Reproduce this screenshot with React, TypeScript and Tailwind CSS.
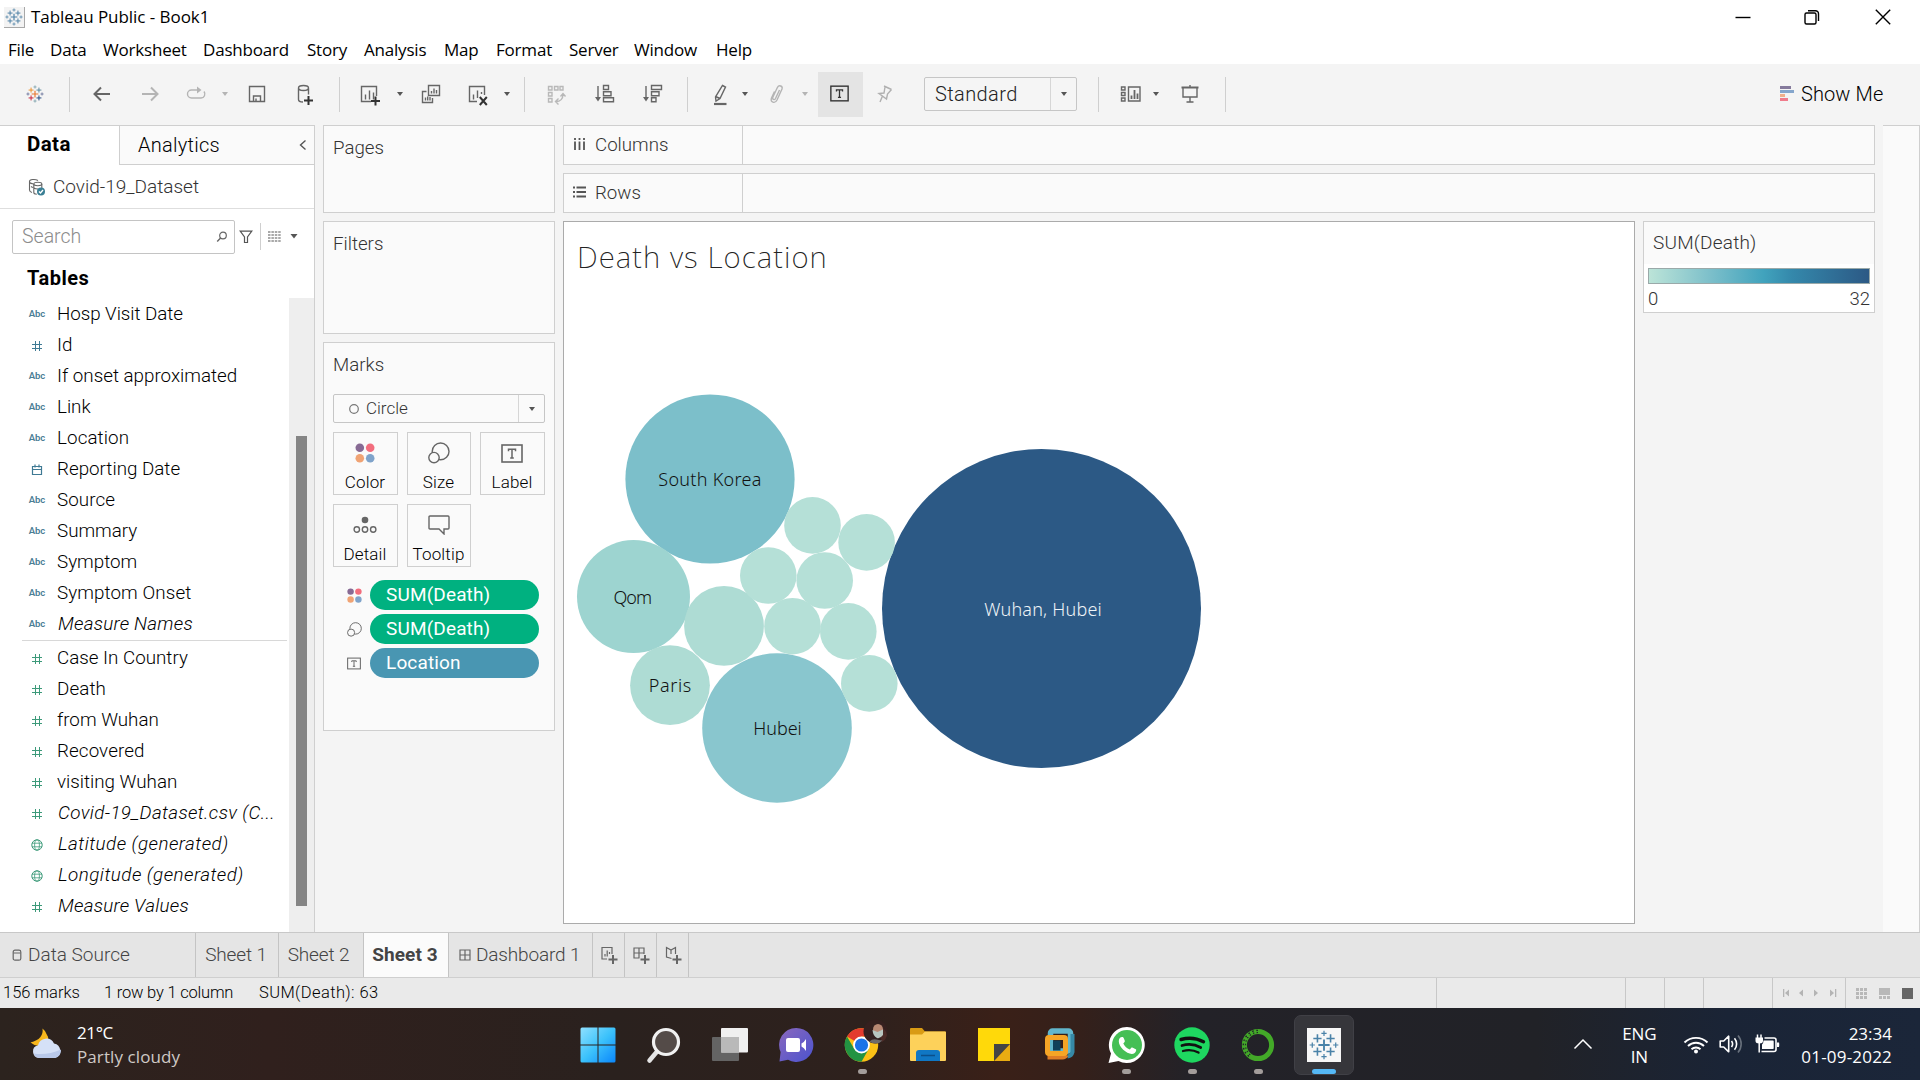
import type { ReactNode } from "react";

type SvgProps = { children: ReactNode; w?: number; h?: number; className?: string };

function Svg({ children, w = 24, h = 24, className = "" }: SvgProps) {
  return (
    <svg
      width={w}
      height={h}
      viewBox={`0 0 ${w} ${h}`}
      fill="none"
      stroke="currentColor"
      strokeWidth="1.4"
      className={`shrink-0 ${className}`}
    >
      {children}
    </svg>
  );
}

/* ---------- shared drawings ---------- */

const LOGO_MARKS: [number, number, number, number, string][] = [
  [16, 16, 6, 2, "#e8762c"],
  [9, 9, 4.4, 1.7, "#eb912c"],
  [23, 9, 4.4, 1.7, "#59879b"],
  [9, 23, 4.4, 1.7, "#c72035"],
  [23, 23, 4.4, 1.7, "#1f457e"],
  [16, 3.5, 2.8, 1.3, "#7099a6"],
  [16, 28.5, 2.8, 1.3, "#7099a6"],
  [3.5, 16, 2.8, 1.3, "#5b6591"],
  [28.5, 16, 2.8, 1.3, "#5b6591"],
];

function TableauMark({ size, mono }: { size: number; mono?: string }) {
  return (
    <svg width={size} height={size} viewBox="0 0 32 32" className="shrink-0">
      {LOGO_MARKS.map(([x, y, r, s, c], i) => (
        <path key={i} d={`M${x - r} ${y}H${x + r}M${x} ${y - r}V${y + r}`} stroke={mono ?? c} strokeWidth={s} />
      ))}
    </svg>
  );
}

function Caret({ className = "text-[#555]" }: { className?: string }) {
  return (
    <svg width="10" height="6" viewBox="0 0 10 6" className={`shrink-0 ${className}`}>
      <path d="M2 1h6L5 5z" fill="currentColor" />
    </svg>
  );
}

function Sep({ className = "" }: { className?: string }) {
  return <div className={`h-[35px] w-px shrink-0 bg-[#cfcfcf] ${className}`} />;
}

function ColorDots({ size }: { size: number }) {
  return (
    <svg width={size} height={size} viewBox="0 0 20 20">
      <circle cx="4.8" cy="4.8" r="4.3" fill="#876a94" />
      <circle cx="15.2" cy="4.8" r="4.3" fill="#f26d7d" />
      <circle cx="4.8" cy="15.2" r="4.3" fill="#f0a374" />
      <circle cx="15.2" cy="15.2" r="4.3" fill="#7fa3ca" />
    </svg>
  );
}

function SizeRings({ size }: { size: number }) {
  return (
    <svg width={size} height={size} viewBox="0 0 22 22" fill="none" stroke="#666" strokeWidth="1.4">
      <circle cx="12.6" cy="9.4" r="8.4" />
      <circle cx="6" cy="15.6" r="5.2" fill="#fafafa" />
    </svg>
  );
}

function TextBoxIcon({ w, h, className = "text-[#666]" }: { w: number; h: number; className?: string }) {
  return (
    <svg width={w} height={h} viewBox="0 0 22 19" fill="none" stroke="currentColor" className={className}>
      <rect x="1" y="1" width="20" height="17" strokeWidth="1.6" />
      <path d="M7.5 7.2V5.3h7v1.9M11 5.3v8.5M9.2 13.9h3.6" strokeWidth="1.5" />
    </svg>
  );
}

const BARS = "M7.5 17.5v-5M11.5 17.5V8.5M15.5 17.5v-7";

/* ---------- title + menu ---------- */

function TitleBar() {
  return (
    <div className="flex h-[35px] shrink-0 items-center bg-white pb-px pl-1">
      <div className="flex h-[21px] w-[21px] items-center justify-center border-r border-b border-[#a8a8a8] bg-[#f3f3f3]">
        <TableauMark size={18} mono="#4a7fa5" />
      </div>
      <span className="ml-1.5 text-[17px] tracking-[-0.05px] text-black">Tableau Public - Book1</span>
      <div className="ml-auto flex items-center pb-px text-black">
        <Svg w={18} h={18} className="mr-[51px]">
          <path d="M1.5 9.5h15" stroke="#000" />
        </Svg>
        <Svg w={18} h={18} className="mr-[53px]">
          <rect x="2" y="5" width="11" height="11" rx="1.5" />
          <path d="M5 2.7h7.5a3 3 0 0 1 3 3V13" />
        </Svg>
        <Svg w={18} h={18} className="mr-[28px]">
          <path d="M1.8 1.8l14.4 14.4M16.2 1.8L1.8 16.2" />
        </Svg>
      </div>
    </div>
  );
}

const MENU: [string, string][] = [
  ["File", "w-[42px]"],
  ["Data", "w-[53px]"],
  ["Worksheet", "w-[100px]"],
  ["Dashboard", "w-[104px]"],
  ["Story", "w-[57px]"],
  ["Analysis", "w-[80px]"],
  ["Map", "w-[52px]"],
  ["Format", "w-[73px]"],
  ["Server", "w-[65px]"],
  ["Window", "w-[82px]"],
  ["Help", "w-[50px]"],
];

function MenuBar() {
  return (
    <div className="flex h-[29px] shrink-0 items-center bg-white pl-2 text-[17px] tracking-[-0.2px] text-black">
      {MENU.map(([t, w]) => (
        <span key={t} className={`${w} shrink-0 pb-px leading-none`}>
          {t}
        </span>
      ))}
    </div>
  );
}

/* ---------- toolbar ---------- */

function Toolbar() {
  return (
    <div className="flex h-[61px] shrink-0 items-center bg-[#f4f4f4] pb-px text-[#666]">
      <div className="ml-[25px] flex w-5 shrink-0 justify-center">
        <TableauMark size={18} />
      </div>
      <Sep className="ml-6" />
      <Svg className="ml-5">
        <path d="M20 12H5M11 5.5L4.5 12l6.5 6.5" strokeWidth="2" />
      </Svg>
      <Svg className="ml-6 text-[#b4b4b4]">
        <path d="M4 12h15M13 5.5l6.5 6.5-6.5 6.5" strokeWidth="2" />
      </Svg>
      <Svg className="ml-[22px] text-[#b4b4b4]">
        <path d="M13 8H7.5a4 4 0 0 0 0 8h9.5a4 4 0 0 0 3-6.5" />
        <path d="M13 4.5L17.5 8 13 11.5z" fill="currentColor" stroke="none" />
      </Svg>
      <Caret className="ml-3 text-[#b4b4b4]" />
      <Svg className="ml-[15px]">
        <path d="M4.500 4.500h15v15h-15zM8.500 19.500v-5.500h7v5.500M11 19.500v-3" />
      </Svg>
      <Svg className="ml-[23px]">
        <path d="M6.500 6.500v11c0 1.500 2 2.500 4.500 2.500M16.500 6.500v6" />
        <ellipse cx="11.500" cy="6" rx="5" ry="2.500" />
        <path d="M16.500 14v9M12 18.500h9" stroke="#333" strokeWidth="2" />
      </Svg>
      <Sep className="ml-[23px]" />
      <Svg className="ml-[18px]">
        <path d="M13 19.500H3.500v-15h15V14" />
        <path d={BARS} />
        <path d="M17.500 14.500v9M13 19h9" stroke="#333" strokeWidth="2" />
      </Svg>
      <Caret className="ml-[13px] text-[#555]" />
      <Svg className="ml-3.5">
        <path d="M9.500 3.500h11v10h-11zM7.500 9.500h-4v11h10v-4.500" />
        <path d="M12.500 11.500V9M15 11.500V6.500M17.500 11.500V8M6.500 18.500v-3M8.700 18.500v-4M11 18.500v-3.500" />
      </Svg>
      <Svg className="ml-[23px]">
        <path d="M11 19.500H3.500v-15h15V13" />
        <path d="M7.500 17.500v-5M11.500 16V8.500M15.500 12v-2" />
        <path d="M13.800 15l7 8M20.800 15l-7 8" stroke="#333" strokeWidth="2" />
      </Svg>
      <Caret className="ml-3 text-[#555]" />
      <Sep className="ml-3" />
      <Svg className="ml-[19px] text-[#b8b8b8]">
        <path d="M4.500 4.500H8V8H4.500zM10.500 4.500H14V8H10.500zM16 4.500h3V8h-3zM4.500 10.500H8V14H4.500zM4.500 16.500H8V20H4.500z" />
        <path d="M19 12.500c0 4-2.500 7-7 7M16.500 14.500l2.500-3 2.500 3M14.500 16.500l-3 3 3 3" />
      </Svg>
      <Svg className="ml-[25px]">
        <path d="M5 4v14" />
        <path d="M2 15h6l-3 4.500z" fill="currentColor" stroke="none" />
        <path d="M10.500 3.500h5v4h-5zM10.500 9.700h7.500v4h-7.500zM10.500 15.800h10v4h-10z" />
      </Svg>
      <Svg className="ml-6">
        <path d="M5 4v14" />
        <path d="M2 15h6l-3 4.500z" fill="currentColor" stroke="none" />
        <path d="M10.500 3.500h10v4h-10zM10.500 9.700h7.500v4h-7.500zM10.500 15.800h4.500v4h-4.500z" />
      </Svg>
      <Sep className="ml-[22px]" />
      <Svg className="ml-5">
        <path d="M14.500 3.500l3 1.500-5.500 11.500-4 2.500-.500-4zM7.500 14.500l4.500 2" />
        <path d="M6 22h12.500" strokeWidth="2.200" />
      </Svg>
      <Caret className="ml-2 text-[#555]" />
      <Svg className="ml-[15px] text-[#b4b4b4]">
        <path d="M14.500 8l-4 8.500c-1 2-3.500 1-2.700-1.200l4.700-10c1.500-2.800 5.500-1.300 4.500 1.700L12 18c-2 4-7 2.500-5.500-2l3-6.500" />
      </Svg>
      <Caret className="ml-[11px] text-[#b4b4b4]" />
      <div className="ml-2 flex h-[45px] w-[45px] shrink-0 items-center justify-center bg-[#e4e4e4] pr-0.5 pb-0.5">
        <TextBoxIcon w={19} h={17} className="text-[#333]" />
      </div>
      <Svg className="ml-2.5 text-[#b0b0b0]">
        <path d="M11 4l7.500 3.500M12 5l-1 6-5 .5 7.500 5.500 1-5 4-4.500M9.500 14L7 20" />
      </Svg>
      <div className="ml-[27px] flex h-[34px] w-[153px] shrink-0 items-center rounded-[2px] border border-[#c6c6c6] bg-[#f5f5f5]">
        <span className="flex-1 pl-2.5 font-['Roboto'] text-[20px] font-light tracking-[0.4px] text-[#222]">Standard</span>
        <span className="flex h-full w-[26px] items-center justify-center border-l border-[#d6d6d6]">
          <Caret />
        </span>
      </div>
      <Sep className="ml-[21px]" />
      <Svg className="ml-5">
        <path d="M9.500 5H21v14H9.500z" />
        <path d="M2.500 5H6v3H2.500zM2.500 10.500H6v3H2.500zM2.500 16H6v3H2.500z" />
        <path d="M12.500 17v-3.500M15.500 17V8M18.500 17v-5.500" strokeWidth="1.800" />
      </Svg>
      <Caret className="ml-2 text-[#555]" />
      <Svg className="ml-[17px]">
        <path d="M3.500 5.500h17" strokeWidth="2" />
        <path d="M5 5.500v9.500h14V5.500M12 3v2M12 15v4.500M8.500 20h7" />
      </Svg>
      <Sep className="ml-[23px]" />
      <svg width="14" height="16" viewBox="0 0 14 16" className="ml-[554px] shrink-0">
        <path d="M0 0h11v3H0z" fill="#857a9c" />
        <path d="M0 4h14v3H0z" fill="#85a6cc" />
        <path d="M0 8h5v3H0z" fill="#f0b08c" />
        <path d="M0 12h8v3H0z" fill="#f07c8c" />
      </svg>
      <span className="ml-[7px] pb-px font-['Roboto'] text-[20px] font-light tracking-[0.1px] text-black">Show Me</span>
    </div>
  );
}

/* ---------- data pane ---------- */

type Kind = "abc" | "num" | "date" | "geo";

function FieldIcon({ kind, tone }: { kind: Kind; tone: string }) {
  if (kind === "abc") return <span className="font-['Roboto'] text-[9.5px] font-semibold text-[#4a7d95]">Abc</span>;
  if (kind === "num")
    return (
      <Svg w={12} h={12} className={tone}>
        <path d="M4.500 1v10M8.500 1v10M1 4.500h10M1 8.500h10" strokeWidth="1" />
      </Svg>
    );
  if (kind === "date")
    return (
      <Svg w={12} h={12} className={tone}>
        <path d="M1.500 2.500h9v8h-9zM1.500 5.500h9M4 .5v3M8 .5v3" strokeWidth="1.200" />
      </Svg>
    );
  return (
    <Svg w={12} h={12} className={tone}>
      <path d="M1 4.200h10M1 7.800h10" strokeWidth=".8" />
      <circle cx="6" cy="6" r="5.200" strokeWidth="1" />
      <ellipse cx="6" cy="6" rx="2.400" ry="5.200" strokeWidth=".8" />
    </Svg>
  );
}

const DIMENSIONS: [Kind, string, string][] = [
  ["abc", "Hosp Visit Date", "tracking-[-0.05px]"],
  ["num", "Id", ""],
  ["abc", "If onset approximated", ""],
  ["abc", "Link", ""],
  ["abc", "Location", "tracking-[0.1px]"],
  ["date", "Reporting Date", ""],
  ["abc", "Source", "tracking-[0.1px]"],
  ["abc", "Summary", ""],
  ["abc", "Symptom", ""],
  ["abc", "Symptom Onset", "tracking-[0.1px]"],
  ["abc", "Measure Names", "italic pl-px tracking-[0.25px]"],
];

const MEASURES: [Kind, string, string][] = [
  ["num", "Case In Country", ""],
  ["num", "Death", "tracking-[0.1px]"],
  ["num", "from Wuhan", ""],
  ["num", "Recovered", "tracking-[0.1px]"],
  ["num", "visiting Wuhan", ""],
  ["num", "Covid-19_Dataset.csv (C...", "italic pl-px tracking-[0.38px]"],
  ["geo", "Latitude (generated)", "italic pl-px tracking-[0.48px]"],
  ["geo", "Longitude (generated)", "italic pl-px tracking-[0.48px]"],
  ["num", "Measure Values", "italic pl-px tracking-[0.25px]"],
];

function FieldRow({ kind, name, tone, cls }: { kind: Kind; name: string; tone: string; cls: string }) {
  return (
    <div className="flex h-[31px] items-center">
      <span className="ml-[23px] flex w-7 justify-center">
        <FieldIcon kind={kind} tone={tone} />
      </span>
      <span className={`ml-1.5 text-[18.8px] font-light whitespace-nowrap text-black ${cls}`}>{name}</span>
    </div>
  );
}

function DataPane() {
  return (
    <div className="flex w-[315px] shrink-0 flex-col border-t border-r border-[#cfcfcf] bg-white font-['Roboto']">
      <div className="flex h-[39px] shrink-0 items-stretch">
        <div className="flex w-[119px] items-center pb-0.5 pl-[27px] text-[20.5px] font-bold tracking-[0.4px] text-black">Data</div>
        <div className="flex flex-1 items-center border-b border-l border-[#cfcfcf] bg-[#fafafa] pl-[18px] text-[20px] font-light tracking-[0.25px] text-black">
          Analytics
          <Svg w={10} h={12} className="mr-1.5 ml-auto text-[#555]">
            <path d="M7.500 1.500L2.500 6l5 4.500" />
          </Svg>
        </div>
      </div>
      <div className="flex h-[44px] shrink-0 items-center border-b border-[#dedede] pt-px pl-[28px] text-[#333]">
        <Svg w={18} h={18} className="text-[#666]">
          <path d="M10 2.500C7 .8 1.500 1.300 1.500 3.500v8.500c0 1.300 1 2 2.500 2.500M1.500 4.500c1 1 2.500 1.300 4 1.500M3 8.500c1 .8 1.500 1 2.500 1" strokeWidth="1.100" />
          <ellipse cx="9.800" cy="6" rx="4" ry="1.700" strokeWidth="1.100" />
          <path d="M5.800 6v8.500c0 1 1.500 1.700 3 1.800M13.800 6v4M6 10c1 .9 2.500 1 4 1" strokeWidth="1.100" />
          <circle cx="13" cy="13.500" r="4" fill="#3a7f95" stroke="none" />
          <path d="M11 13.500l1.500 1.500 2.500-3" stroke="#fff" />
        </Svg>
        <span className="ml-[7px] text-[19px] font-light">Covid-19_Dataset</span>
      </div>
      <div className="flex h-[57px] shrink-0 items-center pb-[2px] pl-3">
        <div className="flex h-[34px] w-[223px] items-center rounded-[2px] border border-[#c4c4c4] pl-[9px]">
          <span className="text-[19.5px] font-light text-[#8c8c8c]">Search</span>
          <Svg w={12} h={12} className="mr-1.5 ml-auto text-[#666]">
            <circle cx="7" cy="4.500" r="3.300" strokeWidth="1.200" />
            <path d="M4.600 7L1.200 10.500" />
          </Svg>
        </div>
        <Svg w={14} h={14} className="ml-1 text-[#555]">
          <path d="M1.200 1.200h11.600L8.500 7v5.500h-3V7z" strokeWidth="1.200" />
        </Svg>
        <div className="ml-[7px] h-[27px] w-px bg-[#cfcfcf]" />
        <Svg w={13} h={11} className="ml-[7px] text-[#555]">
          <path d="M0 1h13M0 4h13M0 7h13M0 10h13" strokeWidth="1.100" strokeDasharray="2.500 .9" />
        </Svg>
        <svg width="8" height="5" viewBox="0 0 8 5" className="ml-[9px]">
          <path d="M.500 0h7L4 4.500z" fill="#555" />
        </svg>
      </div>
      <div className="flex h-[32px] shrink-0 items-center pb-2 pl-[27px] text-[20px] font-bold tracking-[0.5px] text-black">Tables</div>
      <div className="flex flex-1 justify-between">
        <div className="w-[289px] pt-px">
          {DIMENSIONS.map(([k, n, c]) => (
            <FieldRow key={n} kind={k} name={n} cls={c} tone="text-[#3f7a94]" />
          ))}
          <div className="mr-0.5 mb-[2px] ml-[22px] h-px bg-[#d8d8d8]" />
          {MEASURES.map(([k, n, c]) => (
            <FieldRow key={n} kind={k} name={n} cls={c} tone="text-[#3d9a7a]" />
          ))}
        </div>
        <div className="w-[25px] bg-[#eee] pt-[138px] pl-[7px]">
          <div className="h-[470px] w-[11px] bg-[#858585]" />
        </div>
      </div>
    </div>
  );
}

/* ---------- cards column ---------- */

function MarkButton({ icon, label, w }: { icon: ReactNode; label: string; w: string }) {
  return (
    <div className={`${w} flex h-[63px] flex-col items-center border border-[#cfcfcf] pr-px text-[17px] font-light text-black`}>
      <span className="flex h-[41px] w-full items-center justify-center pb-px">{icon}</span>
      <span className="leading-[17px] tracking-[0.15px]">{label}</span>
    </div>
  );
}

function Pill({ icon, label, color }: { icon: ReactNode; label: string; color: string }) {
  return (
    <div className="flex h-[30px] items-center">
      <span className="flex w-[37px] justify-center pl-[5px]">{icon}</span>
      <span className={`${color} flex h-[30px] w-[169px] items-center rounded-full pl-4 text-[19px] font-normal tracking-[0.15px] text-white`}>
        {label}
      </span>
    </div>
  );
}

function Cards() {
  return (
    <div className="ml-2 flex w-[232px] shrink-0 flex-col gap-2 font-['Roboto'] text-[18.7px] font-light text-[#333]">
      <div className="h-[88px] border border-[#cfcfcf] bg-[#fafafa] px-[9px] pt-[9px] leading-[26px]">Pages</div>
      <div className="h-[113px] border border-[#cfcfcf] bg-[#fafafa] px-[9px] pt-[9px] leading-[26px]">Filters</div>
      <div className="flex h-[389px] flex-col border border-[#cfcfcf] bg-[#fafafa] px-[9px] pt-[9px]">
        <div className="h-[42px] leading-[26px]">Marks</div>
        <div className="flex h-[29px] items-center rounded-[2px] border border-[#c6c6c6] text-[17px]">
          <Svg w={12} h={12} className="ml-[14px] text-[#777]">
            <circle cx="6" cy="6" r="4.300" strokeWidth="1.200" />
          </Svg>
          <span className="ml-1.5 flex-1">Circle</span>
          <span className="flex h-full w-[26px] items-center justify-center border-l border-[#d6d6d6]">
            <Caret />
          </span>
        </div>
        <div className="mt-[9px] flex flex-wrap gap-x-[9px] gap-y-[9px]">
          <MarkButton w="w-[65px]" label="Color" icon={<ColorDots size={20} />} />
          <MarkButton w="w-[64px]" label="Size" icon={<SizeRings size={22} />} />
          <MarkButton w="w-[65px]" label="Label" icon={<TextBoxIcon w={22} h={19} />} />
          <MarkButton
            w="w-[65px]"
            label="Detail"
            icon={
              <Svg w={24} h={18} className="text-[#666]">
                <circle cx="12" cy="4" r="3.300" fill="currentColor" stroke="none" />
                <circle cx="3.800" cy="13.500" r="2.700" />
                <circle cx="12" cy="13.500" r="2.700" />
                <circle cx="20.200" cy="13.500" r="2.700" />
              </Svg>
            }
          />
          <MarkButton
            w="w-[64px]"
            label="Tooltip"
            icon={
              <Svg w={22} h={20} className="text-[#666]">
                <path d="M2 1h18q1 0 1 1v11q0 1-1 1h-4v5l-5-5H2q-1 0-1-1V2q0-1 1-1z" />
              </Svg>
            }
          />
        </div>
        <div className="mt-[13px] flex flex-col gap-1">
          <Pill color="bg-[#00b180]" label="SUM(Death)" icon={<ColorDots size={15} />} />
          <Pill color="bg-[#00b180]" label="SUM(Death)" icon={<SizeRings size={15} />} />
          <Pill color="bg-[#4996b2]" label="Location" icon={<TextBoxIcon w={14} h={13} />} />
        </div>
      </div>
    </div>
  );
}

/* ---------- worksheet ---------- */

const BUBBLES: [number, number, number, string][] = [
  [710, 479, 84.6, "#7cbfca"],
  [633.5, 596.6, 56.5, "#9dd4d0"],
  [724, 625.9, 39.9, "#aedcd4"],
  [670, 685.2, 39.9, "#aedcd4"],
  [777, 728, 74.8, "#89c6ce"],
  [1041.5, 608.5, 159.5, "#2c5985"],
  [812.5, 525.4, 28.3, "#b5e0d7"],
  [866.6, 542.4, 28.3, "#b5e0d7"],
  [768.3, 575.5, 28.3, "#b5e0d7"],
  [824.7, 580.5, 28.3, "#b5e0d7"],
  [792.5, 626.2, 28.3, "#b5e0d7"],
  [848.3, 631.4, 28.3, "#b5e0d7"],
  [869.3, 683.4, 28.3, "#b5e0d7"],
];

const LABELS: [number, number, string, string, number][] = [
  [709.8, 486, "South Korea", "#111", 103],
  [632.8, 604, "Qom", "#111", 38.5],
  [670, 692, "Paris", "#111", 42.5],
  [777.5, 735, "Hubei", "#111", 48.5],
  [1043, 616, "Wuhan, Hubei", "#eef3f7", 117.5],
];

function BubbleChart() {
  return (
    <svg width="1070" height="632" viewBox="564 291 1070 632" className="block">
      {BUBBLES.map(([x, y, r, c], i) => (
        <circle key={i} cx={x} cy={y} r={r} fill={c} />
      ))}
      {LABELS.map(([x, y, t, c, w]) => (
        <text key={t} x={x} y={y} fill={c} textAnchor="middle" textLength={w} fontSize="18" fontWeight="300" fontFamily="Noto Sans">
          {t}
        </text>
      ))}
    </svg>
  );
}

function Shelf({ label, icon }: { label: string; icon: ReactNode }) {
  return (
    <div className="flex h-10 shrink-0 border border-[#cfcfcf] bg-[#fafafa]">
      <div className="flex w-[179px] items-center border-r border-[#cfcfcf] pl-[9px] text-[18.7px] font-light text-[#333]">
        {icon}
        <span className="ml-[9px] pt-px">{label}</span>
      </div>
    </div>
  );
}

function Worksheet() {
  return (
    <div className="ml-2 flex w-[1312px] shrink-0 flex-col gap-2 font-['Roboto']">
      <Shelf
        label="Columns"
        icon={
          <Svg w={13} h={12} className="mb-0.5 text-[#555]">
            <path d="M2 0v2M6.500 0v2M11 0v2M2 3.500V12M6.500 3.500V12M11 3.500V12" strokeWidth="1.800" />
          </Svg>
        }
      />
      <Shelf
        label="Rows"
        icon={
          <Svg w={13} h={12} className="mb-0.5 text-[#555]">
            <path d="M0 1.500h2M0 6h2M0 10.500h2M3.500 1.500H13M3.500 6H13M3.500 10.500H13" strokeWidth="1.800" />
          </Svg>
        }
      />
      <div className="flex gap-2">
        <div className="h-[703px] w-[1072px] border border-[#ababab] bg-white">
          <div className="h-[69px] pt-[14px] pl-[13px] font-['Noto_Sans'] text-[29.5px] leading-[42px] font-extralight tracking-[1.05px] text-[#222]">
            Death vs Location
          </div>
          <BubbleChart />
        </div>
        <div className="h-[92px] w-[232px] border border-[#cfcfcf] bg-white text-[#333]">
          <div className="flex h-[42px] items-center bg-[#fafafa] pt-px pl-[9px] text-[19px] font-light tracking-[0.2px]">SUM(Death)</div>
          <div className="mx-1 mt-1 h-4 border border-[#9aa9a9] bg-[linear-gradient(90deg,#bce4d8_0%,#7cbfca_28%,#41a3bd_52%,#3488ab_65%,#2c5985_100%)]" />
          <div className="mx-1 mt-[3px] flex justify-between text-[18.5px] leading-6 font-light">
            <span>0</span>
            <span>32</span>
          </div>
        </div>
      </div>
    </div>
  );
}

/* ---------- sheet tabs + status bar ---------- */

const PLUS = "M15 10v9M10.500 14.500h9";

function SheetTabs() {
  const cell = "flex h-full shrink-0 items-center border-r border-[#c4c4c4]";
  return (
    <div className="flex h-[45px] shrink-0 items-center border-t border-[#c8c8c8] bg-[#e5e5e5] font-['Roboto'] text-[19px] font-light tracking-[-0.15px] text-[#444]">
      <div className={`${cell} w-[196px] pl-3`}>
        <Svg w={10} h={13} className="text-[#666]">
          <rect x="1.200" y="1.200" width="7.600" height="10" rx="1.800" strokeWidth="1.200" />
          <path d="M1.500 4h7" strokeWidth="1" />
        </Svg>
        <span className="ml-1.5 pt-px tracking-normal">Data Source</span>
      </div>
      <div className={`${cell} w-[83px] justify-center pt-px pr-0.5`}>Sheet 1</div>
      <div className={`${cell} w-[85px] justify-center pt-px pr-[5px]`}>Sheet 2</div>
      <div className={`${cell} w-[85px] justify-center bg-[#fbfbfb] pr-0.5 font-bold tracking-[0.1px] text-[#444]`}>Sheet 3</div>
      <div className={`${cell} w-[144px] pl-2.5`}>
        <Svg w={12} h={12} className="text-[#666]">
          <path d="M1 1h10v10H1zM6 1v10M1 6h10" strokeWidth="1.200" />
        </Svg>
        <span className="ml-[5px] pt-px">Dashboard 1</span>
      </div>
      <div className={`${cell} w-8 justify-center pr-0.5 text-[#666]`}>
        <Svg w={20} h={20}>
          <path d="M9 14H4V2.500h10V9M7 11.500V9M9.200 11.500V5.500M11.500 9V7" strokeWidth="1.200" />
          <path d={PLUS} strokeWidth="2" />
        </Svg>
      </div>
      <div className={`${cell} w-8 justify-center pr-0.5 text-[#666]`}>
        <Svg w={20} h={20}>
          <path d="M9.500 13H4V3h10v6M9 3v10M4 8h10" strokeWidth="1.200" />
          <path d={PLUS} strokeWidth="2" />
        </Svg>
      </div>
      <div className={`${cell} w-8 justify-center pr-0.5 text-[#666]`}>
        <Svg w={20} h={20}>
          <path d="M9.500 13.500L4.500 12V2.500L9 5l4.500-2.500V9M9 5v4" strokeWidth="1.200" />
          <path d={PLUS} strokeWidth="2" />
        </Svg>
      </div>
    </div>
  );
}

function StatusBar() {
  const cell = "h-full shrink-0 border-l border-[#c8c8c8]";
  return (
    <div className="flex h-[31px] shrink-0 items-center border-t border-[#cfcfcf] bg-[#eaeaea] pl-[3px] font-['Roboto'] text-[16.5px] font-light text-black">
      <span className="w-[101px] shrink-0 pt-px tracking-[0px]">156 marks</span>
      <span className="w-[155px] shrink-0 pt-px tracking-[-0.2px]">1 row by 1 column</span>
      <span className="pt-px tracking-[0.4px]">SUM(Death): 63</span>
      <div className={`${cell} ml-auto w-[189px]`} />
      <div className={`${cell} w-[39px]`} />
      <div className={`${cell} w-[39px]`} />
      <div className={`${cell} w-[69px]`} />
      <div className={`${cell} flex w-[73px] items-center gap-1 pl-[9px] text-[#b4b4b4]`}>
        <svg width="58" height="8" viewBox="0 0 58 8" fill="currentColor">
          <path d="M1 0h1.300v8H1zM7 .5v7L3 4zM21 .5v7L17 4zM32 .5v7L36 4zM48 .5v7L52 4zM53 0h1.300v8H53z" />
        </svg>
      </div>
      <div className={`${cell} flex w-[75px] items-center pl-2.5`}>
        <svg width="58" height="11" viewBox="0 0 58 11" fill="#b8b8b8">
          <path d="M0 0h3v3H0zM4 0h3v3H4zM8 0h3v3H8zM0 4h3v3H0zM4 4h3v3H4zM8 4h3v3H8zM0 8h3v3H0zM4 8h3v3H4zM8 8h3v3H8z" />
          <path d="M23 0h11v7H23zM23 8h3v3h-3zM27 8h3v3h-3zM31 8h3v3h-3z" />
          <path d="M46 0h11v11H46z" fill="#666" />
        </svg>
      </div>
    </div>
  );
}

/* ---------- taskbar ---------- */

const icon36 = { width: 38, height: 38, viewBox: "0 0 38 38" };

const APPS: { name: string; state: "none" | "open" | "active"; icon: ReactNode }[] = [
  {
    name: "start",
    state: "none",
    icon: (
      <svg {...icon36}>
        <defs>
          <linearGradient id="win" x1="0" y1="0" x2="1" y2="1">
            <stop offset="0" stopColor="#8fe0ff" />
            <stop offset=".5" stopColor="#3cc2fb" />
            <stop offset="1" stopColor="#0a86fb" />
          </linearGradient>
        </defs>
        <path
          d="M3 1.500h15.500v17H1.500V3q0-1.500 1.500-1.500zM19.500 1.500H35q1.500 0 1.500 1.500v15.500h-17zM1.500 19.500h17v17H3q-1.500 0-1.500-1.500zM19.500 19.500h17V35q0 1.500-1.500 1.500H19.500z"
          fill="url(#win)"
        />
      </svg>
    ),
  },
  {
    name: "search",
    state: "none",
    icon: (
      <svg {...icon36} fill="none">
        <path d="M12.500 25L4.500 34.500" stroke="#e4e4e4" strokeWidth="4.500" strokeLinecap="round" />
        <circle cx="21" cy="16" r="12.500" fill="#544b48" stroke="#f1f1f1" strokeWidth="3.200" />
      </svg>
    ),
  },
  {
    name: "taskview",
    state: "none",
    icon: (
      <svg {...icon36}>
        <rect x="1" y="11" width="27" height="24" rx="1" fill="#646464" />
        <rect x="10" y="2" width="27" height="24.500" rx="1" fill="#f0f0f0" />
        <rect x="10" y="11" width="18" height="15.500" fill="#b9b9b9" />
      </svg>
    ),
  },
  {
    name: "chat",
    state: "none",
    icon: (
      <svg {...icon36}>
        <defs>
          <linearGradient id="chat" x1="0" y1="0" x2="1" y2="1">
            <stop offset="0" stopColor="#8a68bd" />
            <stop offset="1" stopColor="#4b53cf" />
          </linearGradient>
        </defs>
        <path d="M19 2a17 17 0 1 1-8 31.800L2.500 35.500 3.600 26A17 17 0 0 1 19 2z" fill="url(#chat)" />
        <rect x="9" y="12" width="14" height="14" rx="2" fill="#fff" />
        <path d="M24.500 17.500q2.500-1 4.500-4.500v12q-2-3.500-4.500-4.500z" fill="#fff" />
      </svg>
    ),
  },
  {
    name: "chrome",
    state: "open",
    icon: (
      <svg {...icon36} className="overflow-visible">
        <circle cx="18.500" cy="19" r="16.700" fill="#fbc116" />
        <path d="M18.500 19L4 10.600A16.700 16.700 0 0 1 33 10.600H18.500z" fill="#e33b2e" />
        <path d="M4 10.600A16.700 16.700 0 0 0 18.500 35.700L25.700 23 18.500 19 11.300 23z" fill="#229342" />
        <circle cx="18.500" cy="19" r="8.400" fill="#fff" />
        <circle cx="18.500" cy="19" r="6.600" fill="#1a73e8" />
        <circle cx="32.500" cy="5.500" r="12" fill="#35201f" />
        <path d="M37 1q6 2 7 8-1 5-5 7-3-8-2-15z" fill="#4a2a26" />
        <ellipse cx="35" cy="3.500" rx="5" ry="5.500" fill="#b98873" />
        <path d="M29.500 4l5 2 5.500-2.500v5.500q-3 4-6 3-4-2-4.500-8z" fill="#b9c6c0" />
        <path d="M26.500 15.500q3-3 7-2t6 1q-3 3.300-7.500 3-3-.2-5.500-2z" fill="#6d6a6a" />
      </svg>
    ),
  },
  {
    name: "explorer",
    state: "none",
    icon: (
      <svg {...icon36}>
        <path d="M1 3q0-1 1-1h11l3 3.500H36q1 0 1 1V12H1z" fill="#d99b14" />
        <path d="M1 8.500h12L16 5.500h20q1 0 1 1V34q0 1-1 1H2q-1 0-1-1z" fill="#fdd15a" />
        <path d="M7 35v-8q0-3 3-3h18q3 0 3 3v8z" fill="#1077c4" />
        <path d="M12 29.500h14" stroke="#0b4f8a" strokeWidth="1.500" />
      </svg>
    ),
  },
  {
    name: "notes",
    state: "none",
    icon: (
      <svg {...icon36}>
        <path d="M3 2h32v16H19v17H3z" fill="#ffd90a" />
        <path d="M19 18h16L19 35z" fill="#444" />
        <path d="M35 18v17H19z" fill="#e9ac12" />
      </svg>
    ),
  },
  {
    name: "vmware",
    state: "none",
    icon: (
      <svg {...icon36} fill="none">
        <rect x="9.500" y="5" width="20" height="20" rx="2" stroke="#62b6cc" strokeWidth="5.500" />
        <path d="M31.500 8v18q-1 4-5 4.500" stroke="#3689a6" strokeWidth="4" />
        <path d="M6.500 31h15q2.500 0 3.500-2" stroke="#e07d25" strokeWidth="5" />
        <rect x="6.500" y="11.500" width="18" height="16" rx="1.500" stroke="#f6a526" strokeWidth="5" />
        <path d="M12 14.500h7.500v10H12z" fill="#10405a" />
      </svg>
    ),
  },
  {
    name: "whatsapp",
    state: "open",
    icon: (
      <svg {...icon36}>
        <path d="M20 1a18 18 0 1 1-8.500 34L1.500 37 4 27.500A18 18 0 0 1 20 1z" fill="#fff" />
        <circle cx="20" cy="19" r="15" fill="#45bf55" />
        <path
          d="M15.200 11c.8 0 1.200.3 1.600 1.300l1 2.500c.2.700 0 1.200-1.500 2.700 1.500 3 3.500 4.800 6.500 6 1.300-1.800 1.800-2.300 2.500-2l3 1.500c.8.400 1 .6.900 1.300-.3 2.400-2.200 3.700-4.400 3.700-5.500-.5-13-7-13-12.800 0-2.200 1.200-4.200 3.400-4.200z"
          fill="#fff"
        />
      </svg>
    ),
  },
  {
    name: "spotify",
    state: "open",
    icon: (
      <svg {...icon36} fill="none">
        <circle cx="19" cy="19" r="17.700" fill="#1ed760" />
        <path d="M8 13.500q12-3.500 22.500 2.300" stroke="#111" strokeWidth="3.400" strokeLinecap="round" />
        <path d="M9 19.500q10-2.800 18.700 2" stroke="#111" strokeWidth="2.800" strokeLinecap="round" />
        <path d="M10 25q8.500-2.200 15.500 1.600" stroke="#111" strokeWidth="2.300" strokeLinecap="round" />
      </svg>
    ),
  },
  {
    name: "anaconda",
    state: "open",
    icon: (
      <svg {...icon36} fill="none">
        <circle cx="19" cy="19" r="13.600" stroke="#43a928" strokeWidth="5" />
        <path d="M19 5.400A13.600 13.600 0 0 0 12 30.700" stroke="#22262a" strokeWidth="3.400" strokeDasharray="1.600 2.400" />
        <path d="M19 5.400A13.600 13.600 0 0 0 12 30.700" stroke="#43a928" strokeWidth="1" />
      </svg>
    ),
  },
  {
    name: "tableau",
    state: "active",
    icon: (
      <span className="flex h-[34px] w-[34px] items-center justify-center bg-[#f7f7f7]">
        <TableauMark size={30} mono="#4a82a8" />
      </span>
    ),
  },
];

function Taskbar() {
  return (
    <div className="flex h-[72px] shrink-0 items-stretch bg-[linear-gradient(90deg,#2c231e_0%,#30201d_14%,#2a211e_32%,#2e211d_45%,#3a2018_52%,#35201a_56%,#232228_62%,#212227_80%,#1a2436_90%,#1b2639_100%)] text-[17px] text-white">
      <div className="flex w-[565px] items-center pl-[29px]">
        <svg width="34" height="34" viewBox="0 0 34 34">
          <path d="M13.500 1.500Q15 12 1.500 15.500 8 21 15 17t3-9q-1-4-4.500-6.500z" fill="#f7b71d" />
          <path d="M10 31a6.500 6.500 0 0 1-1-12.800A8.500 8.500 0 0 1 25 16.500 7.500 7.500 0 0 1 26 31z" fill="#d5e1f7" />
          <path d="M10 31a6.500 6.500 0 0 1-5-4.500q13 2 27-4A7.500 7.500 0 0 1 26 31z" fill="#b9c9ea" />
        </svg>
        <div className="ml-3.5 pt-0.5 leading-6">
          <div className="tracking-[-0.4px]">21°C</div>
          <div className="tracking-[0.1px] text-[#cfc9c6]">Partly cloudy</div>
        </div>
      </div>
      {APPS.map((a) => (
        <div key={a.name} className="flex w-[66px] shrink-0 flex-col items-center py-[7px]">
          <div
            className={`flex h-[60px] w-[60px] flex-col items-center rounded-[7px] ${
              a.state === "active" ? "border border-[#404046] bg-[#36363b] pt-[10px]" : "pt-[11px]"
            }`}
          >
            <div className="flex h-[38px] items-center">{a.icon}</div>
            {a.state === "open" && <div className="mt-[5px] h-[5px] w-[9px] rounded-full bg-[#a39d9b]" />}
            {a.state === "active" && <div className="mt-[5px] h-[5px] w-6 rounded-full bg-[#55b8f5]" />}
          </div>
        </div>
      ))}
      <div className="ml-auto flex items-center pr-[28px]">
        <Svg w={20} h={12} className="mr-[27px]">
          <path d="M1.500 10.500L10 2l8.500 8.500" strokeWidth="1.500" />
        </Svg>
        <div className="mr-[25px] w-[38px] pt-0.5 text-center leading-[23px] tracking-[-0.2px]">
          <div>ENG</div>
          <div>IN</div>
        </div>
        <Svg w={26} h={20}>
          <path d="M1.500 8.500a16.500 16.500 0 0 1 23 0M5 12a11.500 11.500 0 0 1 16 0M8.500 15.300a6.500 6.500 0 0 1 9 0" strokeWidth="1.900" />
          <circle cx="13" cy="17.500" r="2" fill="currentColor" stroke="none" />
        </Svg>
        <Svg w={24} h={20} className="ml-2.5">
          <path d="M1.200 7h3.500l5-4.800v15.600L4.700 13H1.200z" strokeWidth="1.600" strokeLinejoin="round" />
          <path d="M12.500 7a5 5 0 0 1 0 6M15.500 4.200a9 9 0 0 1 0 11.600" strokeWidth="1.600" />
          <path d="M19 1.500a13 13 0 0 1 0 17" stroke="#68707c" strokeWidth="1.600" />
        </Svg>
        <Svg w={25} h={20} className="ml-3">
          <path d="M2.500 .5v4M6 .5v4M4.200 9v9.500" strokeWidth="1.500" />
          <path d="M.5 3.500h7.500V7q0 2.500-3.700 2.500T.500 7z" fill="currentColor" stroke="none" />
          <path d="M9.500 4H19q2 0 2 2v9.500q0 2-2 2H6.500" strokeWidth="1.600" />
          <path d="M8.500 6.500H18q.7 0 .7.700v7q0 .8-.7.800H7v-4.500q1.500-1 1.500-4zM22 8.500h2q.5 2.200 0 4.500h-2z" fill="currentColor" stroke="none" />
        </Svg>
        <div className="ml-[21px] pt-px text-right leading-[23px]">
          <div>23:34</div>
          <div className="tracking-[0.2px]">01-09-2022</div>
        </div>
      </div>
    </div>
  );
}

export default function App() {
  return (
    <div className="flex h-[1080px] w-[1920px] flex-col overflow-hidden bg-[#f4f4f4] font-['Open_Sans',sans-serif]">
      <TitleBar />
      <MenuBar />
      <Toolbar />
      <div className="flex h-[807px] shrink-0">
        <DataPane />
        <Cards />
        <Worksheet />
        <div className="ml-2 w-[37px] border-t border-r border-[#cfcfcf] bg-[#fafafa]" />
      </div>
      <SheetTabs />
      <StatusBar />
      <Taskbar />
    </div>
  );
}
